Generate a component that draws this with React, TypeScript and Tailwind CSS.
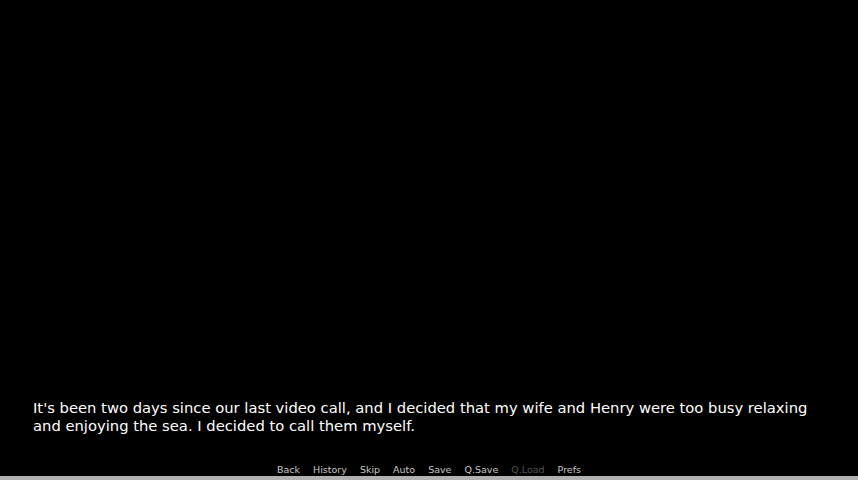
import React from 'react'

const MENU: { label: string; dim?: boolean }[] = [
  { label: 'Back' },
  { label: 'History' },
  { label: 'Skip' },
  { label: 'Auto' },
  { label: 'Save' },
  { label: 'Q.Save' },
  { label: 'Q.Load', dim: true },
  { label: 'Prefs' },
]

const App: React.FC = () => {
  return (
    <div className="flex h-[480px] w-[858px] flex-col bg-black font-['DejaVu_Sans',sans-serif]">
      <div className="flex-1" />
      <div className="px-[33px] pb-[25px] text-[14.75px] leading-[18px] text-white">
        It's been two days since our last video call, and I decided that my wife and Henry were too busy relaxing
        and enjoying the sea. I decided to call them myself.
      </div>
      <div className="flex h-[16px] items-center justify-center gap-[13px] pt-[4px] text-[9.5px] text-[#c8c8c8]">
        {MENU.map(item => (
          <span key={item.label} className={item.dim ? 'text-[#555]' : ''}>
            {item.label}
          </span>
        ))}
      </div>
      <div className="h-[4px] bg-[#b0b0b0]" />
    </div>
  )
}

export default App
